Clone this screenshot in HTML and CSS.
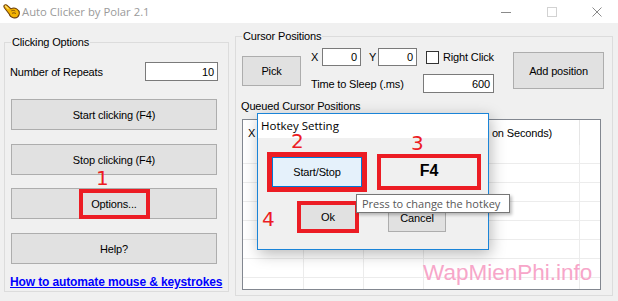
FILE: index.html
```html
<!DOCTYPE html>
<html>
<head>
<meta charset="utf-8">
<title>Auto Clicker by Polar 2.1</title>
<link rel="stylesheet" href="styles.css">
</head>
<body>
<div class="win">
  <div class="titlebar">
    <svg class="appicon" viewBox="0 0 20 17">
      <path d="M2.5 2.2 C3.6 1.4 5 2 6 3 L9.5 6.2 C11 5.2 13.5 5 15.5 6.2 C17.8 7.6 18.8 10 18 12.5 C17.2 15 14.5 16.2 11.8 15.6 C9.5 15.1 8 13.6 7.5 11.6 L2.8 5.6 C1.9 4.5 1.6 3 2.5 2.2 Z" fill="#f4b400" stroke="#6b3d0c" stroke-width="1.1"/>
      <path d="M9.8 8.4 C11 7.6 12.8 7.6 14 8.6" fill="none" stroke="#6b3d0c" stroke-width="0.9"/>
      <path d="M10.5 11 C11.8 10.2 13.6 10.3 14.7 11.3" fill="none" stroke="#6b3d0c" stroke-width="0.9"/>
      <path d="M3.6 3.2 L6.5 6" stroke="#ffe27a" stroke-width="1.2" stroke-linecap="round"/>
    </svg>
    <span class="title">Auto Clicker by Polar 2.1</span>
    <div class="caption">
      <span class="cap-min"></span>
      <span class="cap-max"></span>
      <svg class="cap-close" viewBox="0 0 10 10"><path d="M0.5 0.5 L9.5 9.5 M9.5 0.5 L0.5 9.5" stroke="#8a8a8a" stroke-width="1"/></svg>
    </div>
  </div>

  <div class="content">
    <div class="group g-left">
      <div class="legend">Clicking Options</div>
      <div class="repeats">
        <span class="lbl">Number of Repeats</span>
        <div class="tb tb-rep">10</div>
      </div>
      <div class="btn bigbtn b-start">Start clicking (F4)</div>
      <div class="btn bigbtn b-stop">Stop clicking (F4)</div>
      <div class="btn bigbtn b-opt">Options...<span class="redbox rb-opt"></span></div>
      <div class="btn bigbtn b-help">Help?</div>
      <a class="link" href="#">How to automate mouse &amp; keystrokes</a>
    </div>

    <div class="group g-right">
      <div class="legend">Cursor Positions</div>
      <div class="toprow">
        <div class="btn pick">Pick</div>
        <div class="mid">
          <div class="mrow1">
            <span class="xl">X</span>
            <div class="tb tb-xy">0</div>
            <span class="yl">Y</span>
            <div class="tb tb-xy">0</div>
            <span class="chk"></span>
            <span class="chklbl">Right Click</span>
          </div>
          <div class="mrow2">
            <span class="sleeplbl">Time to Sleep (.ms)</span>
            <div class="tb tb-sleep">600</div>
          </div>
        </div>
        <div class="btn addpos">Add position</div>
      </div>
      <div class="qlabel">Queued Cursor Positions</div>
      <div class="list">
        <div class="lhead">
          <div class="hc">X</div>
          <div class="hc">Y</div>
          <div class="hc">Right Click</div>
          <div class="hc hc-sleep">Sleep (Milli on Seconds)</div>
          <div class="hc"></div>
        </div>
        <div class="lrow"><div></div><div></div><div></div><div></div><div></div></div>
        <div class="lrow"><div></div><div></div><div></div><div></div><div></div></div>
        <div class="lrow"><div></div><div></div><div></div><div></div><div></div></div>
        <div class="lrow"><div></div><div></div><div></div><div></div><div></div></div>
        <div class="lrow"><div></div><div></div><div></div><div></div><div></div></div>
        <div class="lrow"><div></div><div></div><div></div><div></div><div></div></div>
        <div class="lrow"><div></div><div></div><div></div><div></div><div></div></div>
        <div class="lrow"><div></div><div></div><div></div><div></div><div></div></div>
      </div>
    </div>
  </div>

  <div class="dialog">
    <div class="dlg-title">Hotkey Setting</div>
    <div class="dlg-body">
      <div class="drow1">
        <div class="startbox"><div class="btn-focus">Start/Stop</div></div>
        <div class="f4box">F4</div>
      </div>
      <div class="drow2">
        <div class="okbox">Ok</div>
        <div class="btn cancel">Cancel</div>
      </div>
    </div>
  </div>

  <div class="tooltip">Press to change the hotkey</div>

  <span class="num n1">1</span>
  <span class="num n2">2</span>
  <span class="num n3">3</span>
  <span class="num n4">4</span>

  <div class="watermark">WapMienPhi.info</div>
</div>
</body>
</html>
```

FILE: styles.css
```css
* { box-sizing: border-box; }
html, body { margin: 0; padding: 0; }
body {
  width: 618px;
  height: 301px;
  overflow: hidden;
  background: #f0f0f0;
  font-family: "Liberation Sans", Arial, sans-serif;
  font-size: 11px;
  letter-spacing: -0.15px;
  color: #000;
}
.win { position: relative; width: 618px; height: 301px; overflow: hidden; }

/* title bar */
.titlebar { height: 23px; background: #fff; display: flex; align-items: center; }
.appicon { width: 19px; height: 16px; margin-left: 2px; margin-top: -1px; flex: none; }
.title {
  margin-left: 1px;
  font-family: "Open Sans", "Noto Sans", sans-serif;
  font-size: 11.3px;
  letter-spacing: 0;
  color: #9a9a9a;
}
.caption { margin-left: auto; margin-right: 16px; display: flex; align-items: center; }
.cap-min { width: 10px; height: 1px; background: #8a8a8a; margin-top: 1px; }
.cap-max { width: 10px; height: 10px; border: 1px solid #d2d2d2; margin-left: 36px; }
.cap-close { width: 10px; height: 10px; margin-left: 35px; }

/* group boxes */
.content { display: flex; align-items: flex-start; }
.group { border: 1px solid #dcdcdc; display: flex; flex-direction: column; align-items: flex-start; }
.legend { background: #f0f0f0; line-height: 13px; height: 13px; margin-top: -7px; padding: 0 1px; }
.g-left { margin-left: 4px; margin-top: 19px; width: 225px; height: 250px; }
.g-left .legend { margin-left: 6px; }
.g-right { margin-left: 6px; margin-top: 13px; width: 378px; height: 260px; }
.g-right .legend { margin-left: 6px; }

.tb {
  background: #fff;
  border: 1px solid #7a7a7a;
  text-align: right;
  padding-right: 3px;
  display: flex;
  align-items: center;
  justify-content: flex-end;
}

.repeats { display: flex; align-items: center; width: 100%; height: 19px; margin-top: 13px; }
.repeats .lbl { margin-left: 5px; }
.tb-rep { margin-left: auto; margin-right: 10px; width: 73px; height: 19px; }

.btn {
  background: #e1e1e1;
  border: 1px solid #adadad;
  display: flex;
  align-items: center;
  justify-content: center;
}
.bigbtn { width: 206px; height: 31px; margin-left: 6px; position: relative; }
.b-start { margin-top: 18px; }
.b-stop { margin-top: 14px; }
.b-opt { margin-top: 13px; }
.b-help { margin-top: 14px; }

.redbox { position: absolute; border: 4px solid #ec1c24; }
.rb-opt { left: 67px; top: 0; width: 71px; height: 30px; }

.link {
  margin-top: 11px;
  margin-left: 5px;
  font-weight: bold;
  font-size: 12px;
  line-height: 14px;
  letter-spacing: -0.13px;
  color: #0000ff;
  text-decoration: underline;
}

/* right group */
.toprow { display: flex; align-items: flex-start; }
.pick { width: 59px; height: 30px; margin-left: 6px; margin-top: 13px; }
.mid { margin-left: 10px; margin-top: 5px; width: 183px; display: flex; flex-direction: column; }
.mrow1 { display: flex; align-items: center; height: 18px; }
.xl { width: 11px; }
.yl { margin-left: 8px; width: 9px; }
.tb-xy { width: 39px; height: 18px; }
.chk { width: 13px; height: 13px; border: 1px solid #333; background: #fff; margin-left: 9px; }
.chklbl { margin-left: 4px; white-space: nowrap; }
.mrow2 { display: flex; align-items: center; height: 19px; margin-top: 8px; }
.sleeplbl { width: 112px; white-space: nowrap; }
.tb-sleep { width: 71px; height: 19px; }
.addpos { margin-left: 19px; margin-top: 9px; width: 91px; height: 37px; }

.qlabel { margin-left: 5px; margin-top: 7px; line-height: 13px; }
.list {
  margin-left: 6px;
  margin-top: 6px;
  width: 359px;
  height: 171px;
  border: 1px solid #828790;
  background: #fff;
  overflow: hidden;
}
.lhead, .lrow { display: grid; grid-template-columns: 61px 60px 60px 156px 1fr; }
.lhead { height: 25px; }
.hc { display: flex; align-items: center; padding-left: 5px; white-space: nowrap; overflow: hidden; }
.hc-sleep { justify-content: flex-end; padding-right: 27px; border-right: 1px solid #e5e5e5; }
.lrow { height: 19px; }
.lrow div { border-right: 1px solid #ececec; border-bottom: 1px solid #ececec; }
.lrow div:last-child { border-right: none; }

/* dialog */
.dialog {
  position: absolute;
  left: 257px;
  top: 113px;
  width: 232px;
  height: 137px;
  border: 1px solid #1a84d8;
  background: #f0f0f0;
  box-shadow: 2px 4px 14px rgba(0, 0, 0, 0.28);
}
.dlg-title {
  height: 24px;
  background: #fff;
  padding-left: 3px;
  font-family: "Open Sans", "Noto Sans", sans-serif;
  font-size: 11.5px;
  letter-spacing: 0;
  line-height: 24px;
}
.dlg-body { display: flex; flex-direction: column; }
.drow1 { display: flex; align-items: flex-start; margin-top: 14px; margin-left: 9px; }
.startbox { width: 100px; height: 40px; border: 5px solid #ec1c24; }
.btn-focus {
  width: 90px;
  height: 30px;
  background: #e5f1fb;
  border: 1px solid #0078d7;
  display: flex;
  align-items: center;
  justify-content: center;
}
.f4box {
  margin-left: 10px;
  margin-top: 2px;
  width: 104px;
  height: 36px;
  border: 4px solid #ec1c24;
  display: flex;
  align-items: center;
  justify-content: center;
  padding-bottom: 3px;
  font-size: 16px;
  font-weight: bold;
  letter-spacing: 0;
}
.drow2 { display: flex; align-items: flex-start; margin-top: 9px; margin-left: 39px; }
.okbox {
  width: 62px;
  height: 32px;
  border: 4px solid #ec1c24;
  background: #e1e1e1;
  display: flex;
  align-items: center;
  justify-content: center;
}
.cancel { margin-left: 29px; margin-top: 2px; width: 58px; height: 29px; }

/* tooltip */
.tooltip {
  position: absolute;
  left: 356px;
  top: 194px;
  width: 154px;
  height: 19px;
  background: #fff;
  border: 1px solid #767676;
  box-shadow: 2px 2px 3px rgba(0, 0, 0, 0.25);
  font-family: "Open Sans", "Noto Sans", sans-serif;
  font-size: 11px;
  letter-spacing: 0;
  line-height: 17px;
  padding-left: 5px;
  color: #575757;
  white-space: nowrap;
}

/* annotation digits */
.num {
  position: absolute;
  font-family: "DejaVu Sans", sans-serif;
  font-size: 20px;
  line-height: 20px;
  letter-spacing: 0;
  color: #ec1c24;
}
.n1 { left: 96px; top: 168px; }
.n2 { left: 291px; top: 131px; }
.n3 { left: 411px; top: 133px; }
.n4 { left: 262px; top: 209px; }

.watermark {
  position: absolute;
  left: 423px;
  top: 262px;
  font-family: "Liberation Sans", Arial, sans-serif;
  font-size: 22.5px;
  line-height: 1;
  letter-spacing: 0;
  color: #f7a6c9;
}
```
